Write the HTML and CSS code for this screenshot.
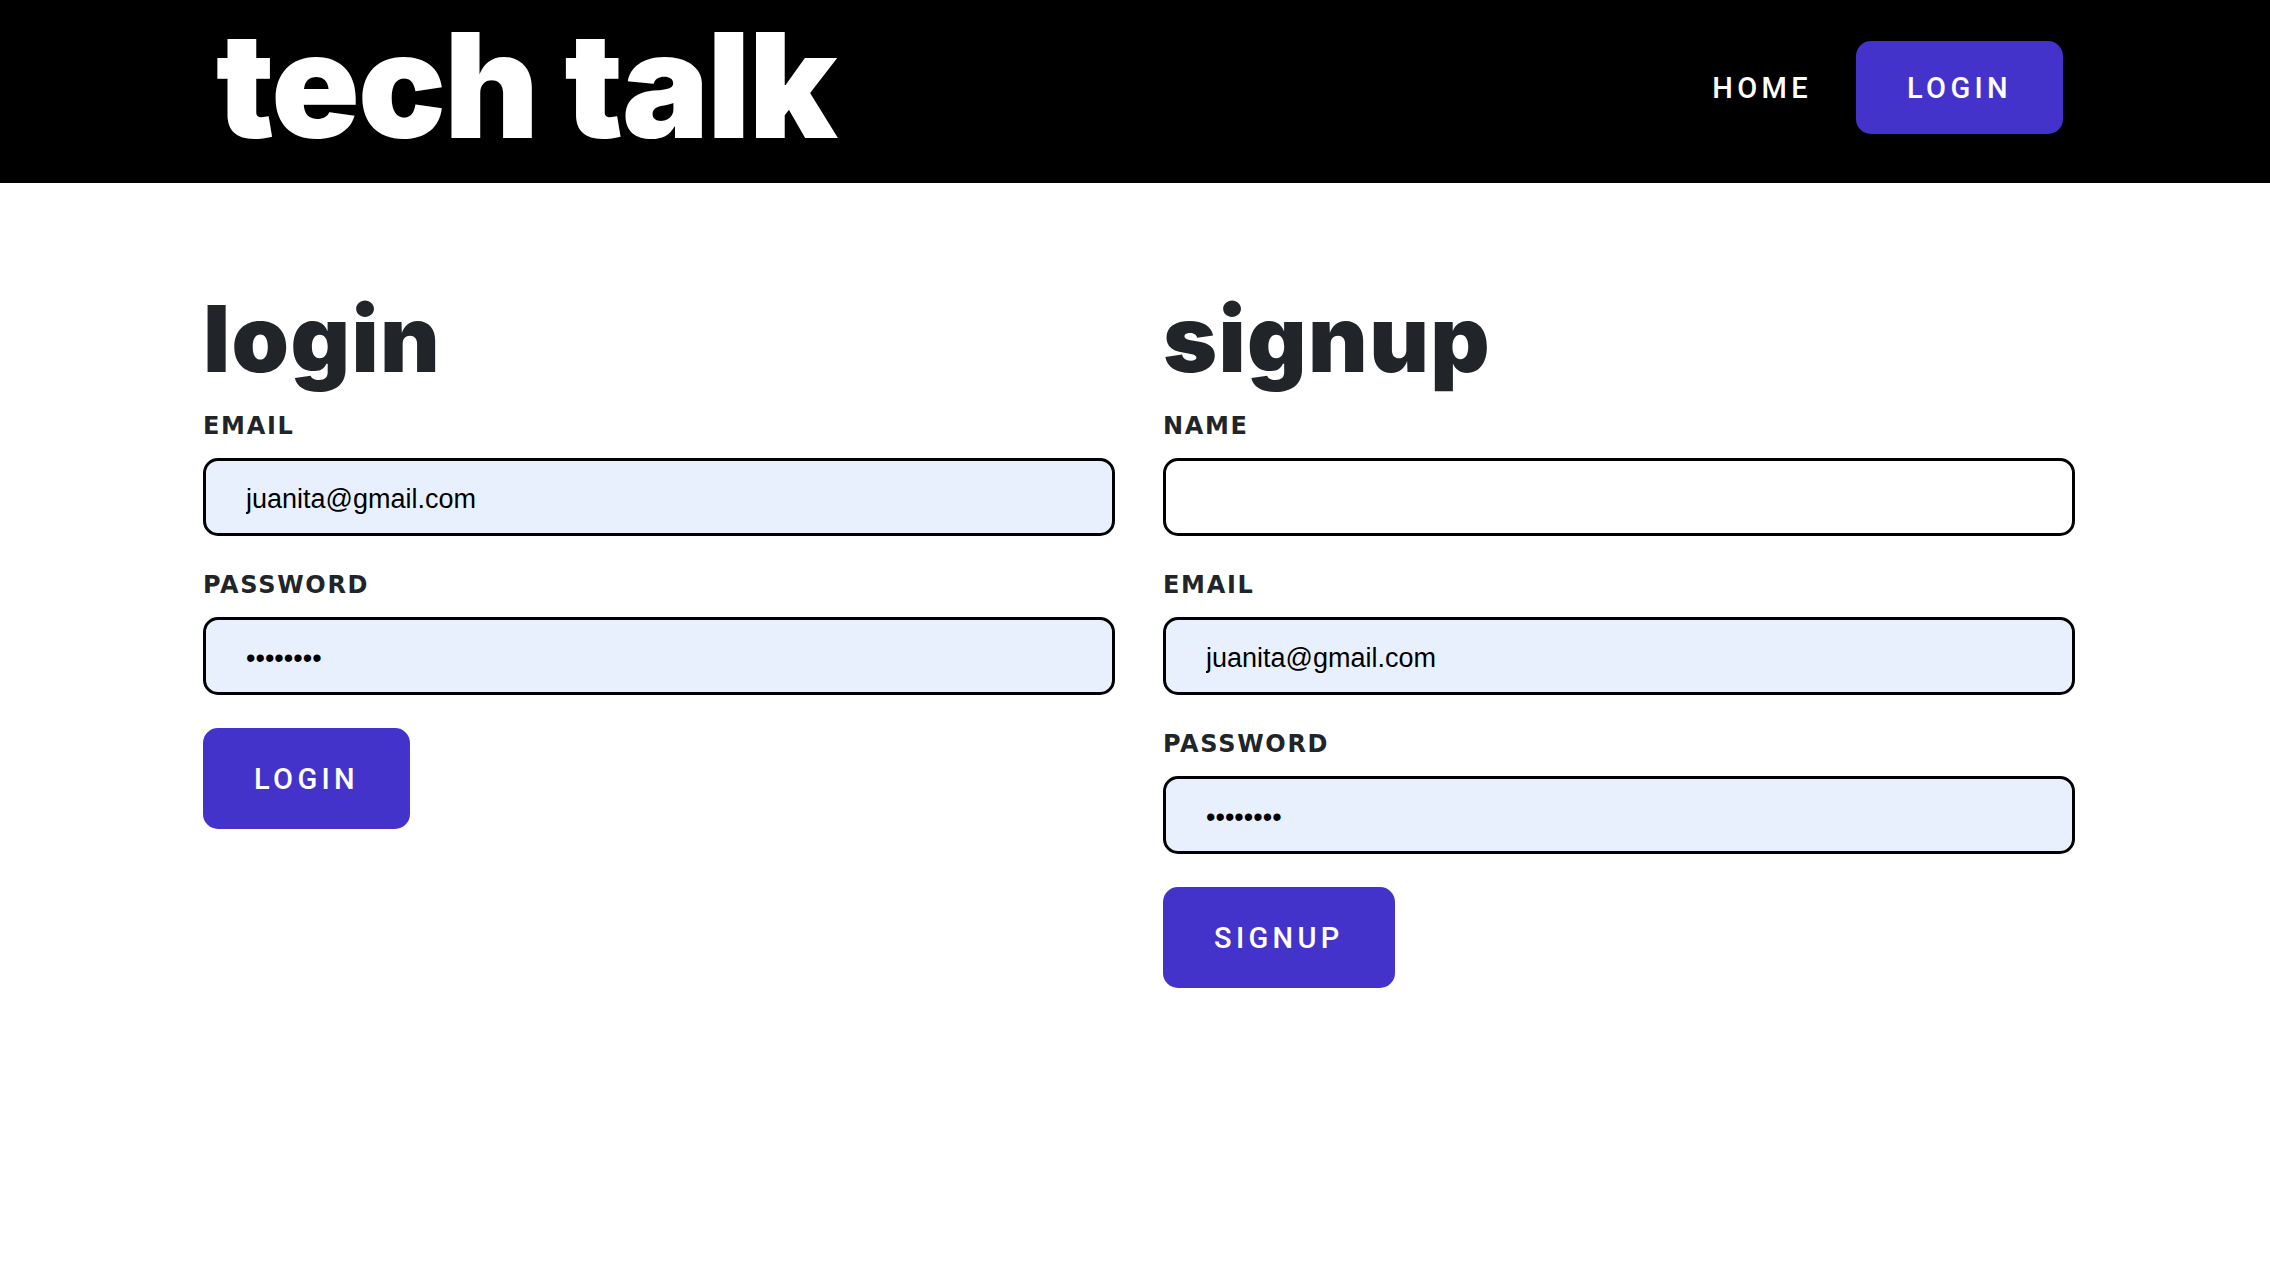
FILE: index.html
```html
<!DOCTYPE html>
<html lang="en">
<head>
<meta charset="utf-8">
<title>tech talk</title>
<link rel="stylesheet" href="styles.css">
</head>
<body>
<header class="site-header">
  <a class="logo" href="#">tech talk</a>
  <nav class="nav">
    <a class="nav-link" href="#">HOME</a>
    <a class="btn btn-nav" href="#">LOGIN</a>
  </nav>
</header>
<main class="auth">
  <section class="panel">
    <h1 class="panel-title">login</h1>
    <form class="form">
      <div class="field">
        <label class="field-label" for="login-email">EMAIL</label>
        <input class="field-input filled" id="login-email" type="email" value="juanita@gmail.com">
      </div>
      <div class="field">
        <label class="field-label" for="login-password">PASSWORD</label>
        <input class="field-input filled" id="login-password" type="password" value="juanita1">
      </div>
      <button class="btn btn-form" type="button">LOGIN</button>
    </form>
  </section>
  <section class="panel">
    <h1 class="panel-title">signup</h1>
    <form class="form">
      <div class="field">
        <label class="field-label" for="signup-name">NAME</label>
        <input class="field-input" id="signup-name" type="text" value="">
      </div>
      <div class="field">
        <label class="field-label" for="signup-email">EMAIL</label>
        <input class="field-input filled" id="signup-email" type="email" value="juanita@gmail.com">
      </div>
      <div class="field">
        <label class="field-label" for="signup-password">PASSWORD</label>
        <input class="field-input filled" id="signup-password" type="password" value="juanita1">
      </div>
      <button class="btn btn-form" type="button">SIGNUP</button>
    </form>
  </section>
</main>
</body>
</html>
```

FILE: styles.css
```css
body {
  margin: 0;
  background: #ffffff;
  font-family: Roboto, "Liberation Sans", sans-serif;
  color: #212529;
}

.site-header {
  box-sizing: border-box;
  height: 183px;
  background: #000000;
  display: flex;
  align-items: center;
  justify-content: space-between;
  padding: 0 207px 0 216px;
}

.logo {
  font-family: Inter, "Liberation Sans", sans-serif;
  font-weight: 900;
  font-size: 146px;
  line-height: 1;
  letter-spacing: -0.012em;
  color: #ffffff;
  text-decoration: none;
  padding-bottom: 14px;
}

.nav {
  display: flex;
  align-items: center;
  gap: 44px;
  margin-bottom: 8px;
}

.nav-link {
  color: #ffffff;
  text-decoration: none;
  font-family: Roboto, "Liberation Sans", sans-serif;
  font-weight: 500;
  font-size: 29px;
  line-height: 34px;
  letter-spacing: 0.15em;
}

.btn {
  display: inline-block;
  border: 0;
  border-radius: 15px;
  background: #4433cb;
  color: #ffffff;
  text-decoration: none;
  font-family: Roboto, "Liberation Sans", sans-serif;
  font-weight: 500;
  font-size: 29px;
  line-height: 34px;
  letter-spacing: 0.15em;
  cursor: pointer;
}

.btn-nav {
  padding: 29.5px 51px;
}

.btn-form {
  padding: 33.5px 51px;
  margin-top: 33px;
}

.auth {
  display: grid;
  grid-template-columns: 1fr 1fr;
  column-gap: 48px;
  align-items: start;
  padding: 110px 195px 0 203px;
}

.panel-title {
  margin: 0 0 27px;
  font-family: Inter, "Liberation Sans", sans-serif;
  font-weight: 900;
  font-size: 92px;
  line-height: 1;
  letter-spacing: 0.015em;
  color: #212529;
}

.form {
  margin: 0;
}

.field + .field {
  margin-top: 35px;
}

.field-label {
  display: block;
  margin-bottom: 18px;
  font-family: "DejaVu Sans", sans-serif;
  font-weight: 700;
  font-size: 24px;
  line-height: 28px;
  letter-spacing: 0.07em;
  color: #212529;
}

.field-input {
  display: block;
  box-sizing: border-box;
  width: 100%;
  height: 78px;
  margin: 0;
  border: 3px solid #000000;
  border-radius: 15px;
  padding: 5px 40px 0;
  background: #ffffff;
  color: #000000;
  font-family: "Liberation Sans", Arial, sans-serif;
  font-size: 27px;
  outline: none;
}

.field-input.filled {
  background: #e8f0fe;
}
```
